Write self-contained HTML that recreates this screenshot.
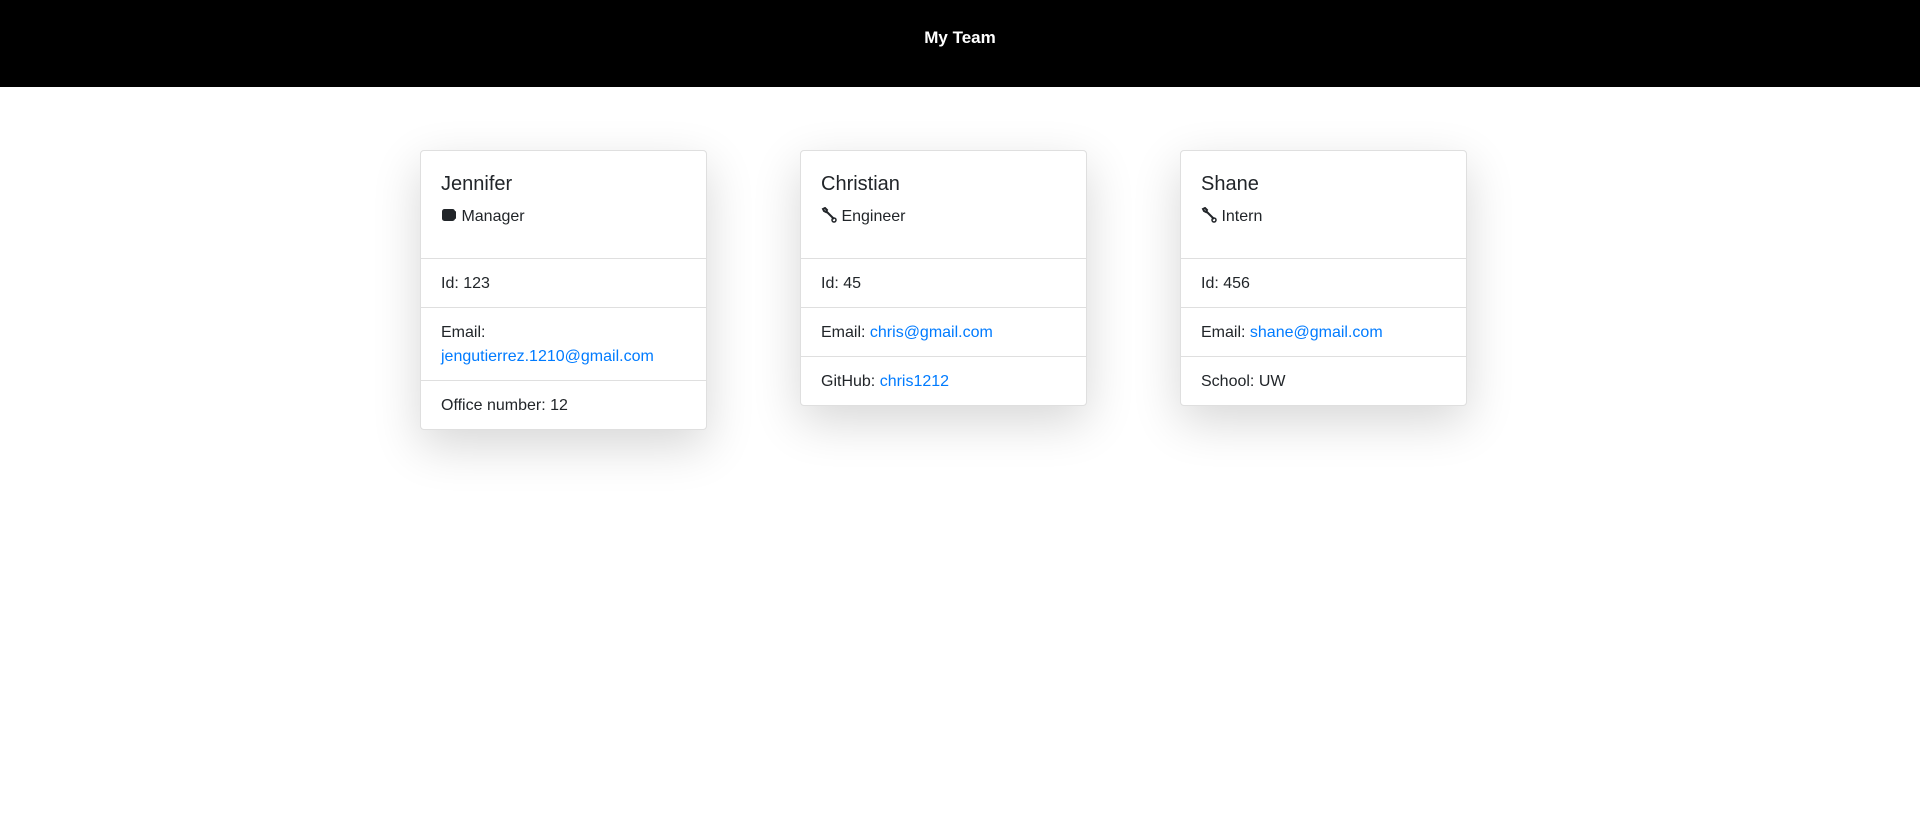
<!DOCTYPE html>
<html><head><style>
*{box-sizing:border-box;margin:0;padding:0}
body{width:1920px;height:821px;background:#fff;font-family:"Liberation Sans",Arial,sans-serif;color:#212529;font-size:16px;line-height:24px;overflow:hidden}
.hdr{height:87px;background:#000;color:#fff;text-align:center;font-weight:bold;font-size:17px;line-height:76px}
.card{position:absolute;top:150px;width:287px;border:1px solid rgba(0,0,0,.125);border-radius:4px;background:#fff;box-shadow:0 16px 48px rgba(0,0,0,.16)}
.body{height:108px;padding:21px 20px 0;border-bottom:1px solid rgba(0,0,0,.125)}
.t{font-size:20px;line-height:24px;margin-bottom:9px;font-weight:500}
.row{padding:13px 20px 11px;border-bottom:1px solid rgba(0,0,0,.125)}
.row:last-child{border-bottom:none}
a{color:#007bff;text-decoration:none}
svg{vertical-align:-2px}
</style></head><body>
<div class="hdr">My Team</div>
<div class="card" style="left:420px">
<div class="body"><div class="t">Jennifer</div><div><svg width="16" height="16" viewBox="0 0 16 16"><rect x="1" y="2" width="13" height="12" rx="2.5" fill="#212529"/><rect x="13" y="4" width="2" height="8" rx="1" fill="#212529"/></svg> Manager</div></div>
<div class="row">Id: 123</div>
<div class="row">Email:<br><a>jengutierrez.1210@gmail.com</a></div>
<div class="row">Office number: 12</div>
</div>
<div class="card" style="left:800px">
<div class="body"><div class="t">Christian</div><div><svg width="16" height="16" viewBox="0 0 16 16"><path d="M2 2l2-1 2 2-1 2-2-1zM5 4l8 8" stroke="#212529" stroke-width="2" fill="none"/><circle cx="13" cy="13" r="2" stroke="#212529" stroke-width="1.5" fill="none"/></svg> Engineer</div></div>
<div class="row">Id: 45</div>
<div class="row">Email: <a>chris@gmail.com</a></div>
<div class="row">GitHub: <a>chris1212</a></div>
</div>
<div class="card" style="left:1180px">
<div class="body"><div class="t">Shane</div><div><svg width="16" height="16" viewBox="0 0 16 16"><path d="M2 2l2-1 2 2-1 2-2-1zM5 4l8 8" stroke="#212529" stroke-width="2" fill="none"/><circle cx="13" cy="13" r="2" stroke="#212529" stroke-width="1.5" fill="none"/></svg> Intern</div></div>
<div class="row">Id: 456</div>
<div class="row">Email: <a>shane@gmail.com</a></div>
<div class="row">School: UW</div>
</div>
</body></html>
